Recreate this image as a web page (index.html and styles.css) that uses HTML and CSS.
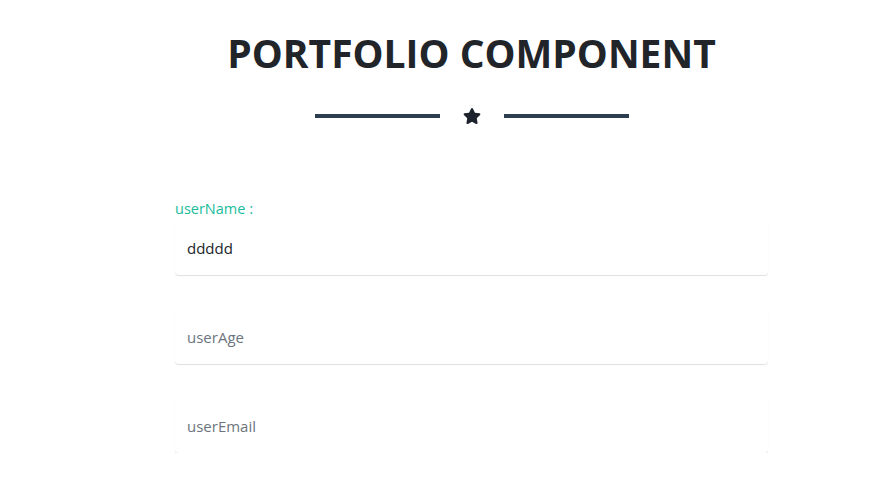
FILE: index.html
```html
<!DOCTYPE html>
<html lang="en">
<head>
<meta charset="utf-8">
<title>Portfolio Component</title>
<link rel="stylesheet" href="styles.css">
</head>
<body>
<main class="page">
  <h1 class="title">PORTFOLIO COMPONENT</h1>
  <div class="divider">
    <span class="divider-line"></span>
    <svg class="divider-star" viewBox="0 0 576 512" aria-hidden="true"><path d="M259.3 17.8L194 150.2 47.9 171.5c-26.2 3.8-36.7 36.1-17.7 54.6l105.7 103-25 145.5c-4.5 26.3 23.2 46 46.4 33.7L288 439.6l130.7 68.7c23.2 12.2 50.9-7.4 46.4-33.7l-25-145.5 105.7-103c19-18.5 8.5-50.8-17.7-54.6L382 150.2 316.7 17.8c-11.7-23.6-45.6-23.9-57.4 0z"/></svg>
    <span class="divider-line"></span>
  </div>
  <form class="form">
    <div class="field has-value">
      <label class="field-label" for="userName">userName :</label>
      <input class="field-input" id="userName" type="text" value="ddddd" placeholder="userName">
    </div>
    <div class="field">
      <label class="field-label" for="userAge">userAge :</label>
      <input class="field-input" id="userAge" type="text" placeholder="userAge">
    </div>
    <div class="field">
      <label class="field-label" for="userEmail">userEmail :</label>
      <input class="field-input" id="userEmail" type="text" placeholder="userEmail">
    </div>
  </form>
</main>
</body>
</html>
```

FILE: styles.css
```css
html, body {
  margin: 0;
  padding: 0;
  background: #ffffff;
}

body {
  font-family: "Open Sans", "Liberation Sans", sans-serif;
  color: #212529;
}

.page {
  width: 593px;
  margin-left: 175px;
  padding-top: 29px;
}

.title {
  margin: 0;
  text-align: center;
  font-size: 39px;
  font-weight: 700;
  line-height: 48px;
  color: #212529;
}

.divider {
  display: flex;
  align-items: center;
  justify-content: center;
  margin-top: 29px;
  height: 20px;
}

.divider-line {
  width: 125px;
  height: 4px;
  background: #2c3e50;
}

.divider-star {
  width: 18px;
  height: 16px;
  margin: 0 23px;
  fill: #1c232c;
}

.form {
  margin-top: 74px;
  display: flex;
  flex-direction: column;
  gap: 14px;
}

.field {
  display: flex;
  flex-direction: column;
}

.field-label {
  font-size: 14.5px;
  line-height: 18px;
  margin-bottom: 2px;
  color: #1abc9c;
  opacity: 0;
}

.field.has-value .field-label {
  opacity: 1;
}

.field-input {
  height: 55px;
  box-sizing: border-box;
  border: none;
  border-radius: 4px;
  padding: 0 12px;
  font-family: "Open Sans", "Liberation Sans", sans-serif;
  font-size: 15px;
  color: #212529;
  background: #ffffff;
  box-shadow: 0 1px 0 #e2e2e2, 0 1px 2px rgba(0, 0, 0, 0.04);
  outline: none;
}

.field-input::placeholder {
  color: #6c757d;
}
```
